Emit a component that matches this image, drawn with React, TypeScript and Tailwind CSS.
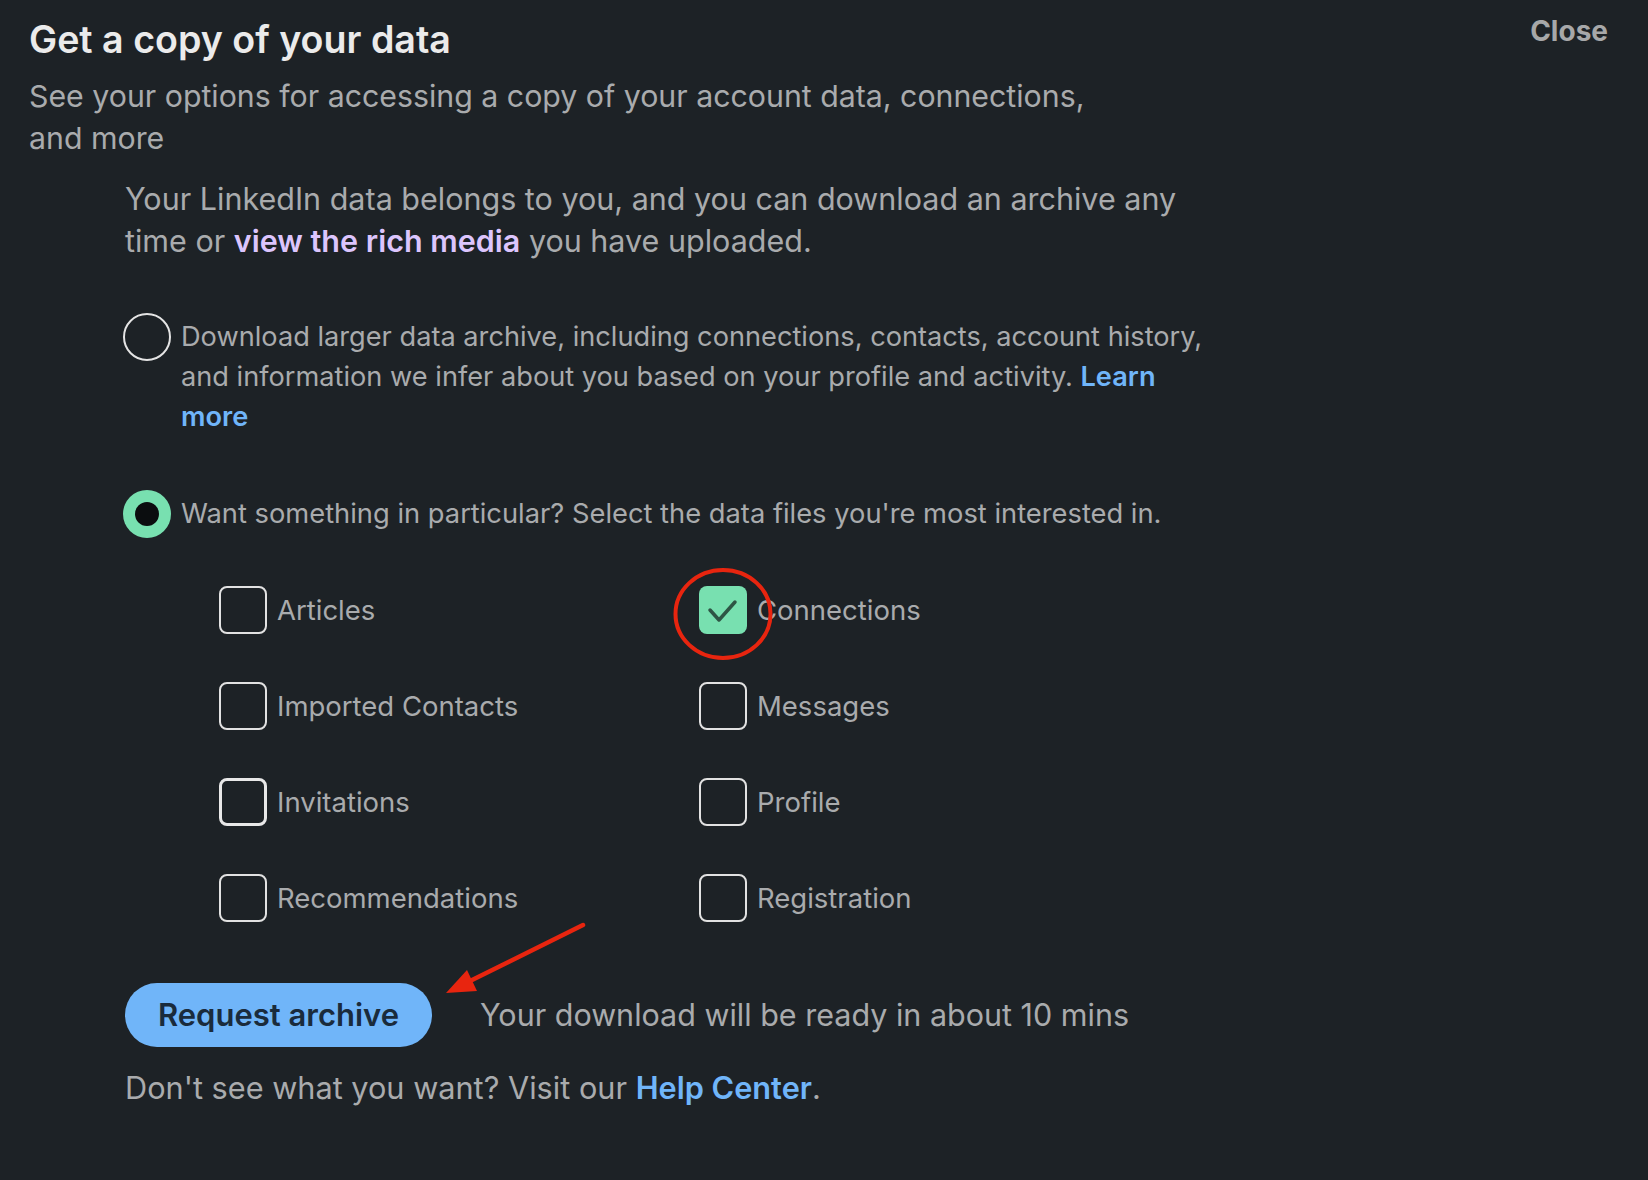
import React from "react";

function Radio({ checked }: { checked: boolean }) {
  return (
    <div className="flex h-[40px] shrink-0 items-center">
      {checked ? (
        <div className="flex h-[48px] w-[48px] items-center justify-center rounded-full bg-[#78e0b0]">
          <div className="h-[24px] w-[24px] rounded-full bg-[#0b0d0f]" />
        </div>
      ) : (
        <div className="h-[48px] w-[48px] rounded-full border-2 border-[#e4e4e4]" />
      )}
    </div>
  );
}

function Check({ label, checked, thick }: { label: string; checked?: boolean; thick?: boolean }) {
  return (
    <div className="flex h-[48px] items-center gap-[10px]">
      {checked ? (
        <div className="h-[48px] w-[48px] shrink-0 rounded-[8px] bg-[#78e0b0]">
          <svg width="48" height="48" viewBox="0 0 48 48">
            <path d="M11 24 L20 34 L36 16" fill="none" stroke="#2e5545" strokeWidth="3.5" strokeLinecap="round" strokeLinejoin="round" />
          </svg>
        </div>
      ) : (
        <div
          className={
            thick
              ? "h-[48px] w-[48px] shrink-0 rounded-[8px] border-[3px] border-[#e8e8e8]"
              : "h-[48px] w-[48px] shrink-0 rounded-[8px] border-2 border-[#e2e2e2]"
          }
        />
      )}
      <span className="whitespace-nowrap text-[27.5px] leading-[40px] text-[#a9abad]">{label}</span>
    </div>
  );
}

export default function App() {
  return (
    <div className="relative min-h-screen bg-[#1d2226] font-['Inter',sans-serif] text-[#a9abad]">
      <div className="flex justify-between pl-[29px] pr-[40px]">
        <div className="pt-[20px]">
          <h1 className="text-[37.6px] font-semibold leading-[40px] text-[#ebebeb]">Get a copy of your data</h1>
          <p className="mt-[15px] whitespace-nowrap text-[30.3px] leading-[42px]">
            See your options for accessing a copy of your account data, connections,
            <br />
            and more
          </p>
        </div>
        <button className="mt-[14px] h-[34px] self-start text-[28px] font-bold leading-[34px] text-[#a7a8a9]">Close</button>
      </div>

      <div className="pl-[125px]">
        <p className="mt-[19px] whitespace-nowrap text-[30.5px] leading-[42px]">
          Your LinkedIn data belongs to you, and you can download an archive any
          <br />
          time or <span className="font-semibold text-[#dcc5fd]">view the rich media</span> you have uploaded.
        </p>

        <div className="-ml-[2px] mt-[55px] flex gap-[10px]">
          <Radio checked={false} />
          <p className="whitespace-nowrap text-[27.2px] leading-[40px]">
            Download larger data archive, including connections, contacts, account history,
            <br />
            and information we infer about you based on your profile and activity.{" "}
            <span className="font-semibold text-[#70b5f9]">Learn</span>
            <br />
            <span className="font-semibold text-[#70b5f9]">more</span>
          </p>
        </div>

        <div className="-ml-[2px] mt-[57px] flex gap-[10px]">
          <Radio checked={true} />
          <p className="whitespace-nowrap text-[27.3px] leading-[40px]">
            Want something in particular? Select the data files you're most interested in.
          </p>
        </div>

        <div className="mt-[52px] grid grid-cols-[480px_480px] gap-y-[48px] pl-[94px]">
          <Check label="Articles" />
          <Check label="Connections" checked />
          <Check label="Imported Contacts" />
          <Check label="Messages" />
          <Check label="Invitations" thick />
          <Check label="Profile" />
          <Check label="Recommendations" />
          <Check label="Registration" />
        </div>

        <div className="mt-[61px] flex items-center gap-[48px]">
          <button className="h-[64px] w-[307px] rounded-full bg-[#70b5f9] text-[31px] font-semibold text-[#1a2b3c]">
            Request archive
          </button>
          <span className="text-[30.5px] leading-[42px]">Your download will be ready in about 10 mins</span>
        </div>

        <p className="mt-[20px] text-[30.7px] leading-[42px]">
          Don't see what you want? Visit our <span className="font-semibold text-[#70b5f9]">Help Center</span>.
        </p>
      </div>

      <svg className="pointer-events-none absolute left-0 top-0" width="1648" height="1180" viewBox="0 0 1648 1180">
        <ellipse cx="723" cy="614" rx="47.5" ry="44" fill="none" stroke="#e8250f" strokeWidth="4" />
        <line x1="583" y1="925" x2="468" y2="982" stroke="#e8250f" strokeWidth="4.5" strokeLinecap="round" />
        <polygon points="446,993 467,970 477,991" fill="#e8250f" />
      </svg>
    </div>
  );
}
